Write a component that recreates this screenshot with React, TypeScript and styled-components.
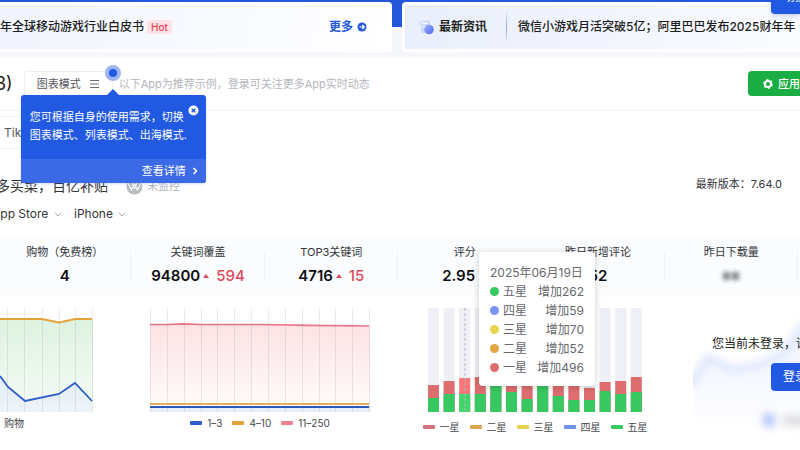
import React from "react";
import styled, { createGlobalStyle } from "styled-components";

const GlobalStyle = createGlobalStyle`
  * { box-sizing: border-box; }
  body {
    margin: 0;
    background: #fff;
    color: #1c1d20;
    font-family: Inter, "Noto Sans CJK SC", sans-serif;
    font-size: 11px;
    line-height: 16px;
  }
  button, select { font: inherit; border: 0; margin: 0; cursor: pointer; }
  h1, h2, p, ul, dl, dd, dt { margin: 0; padding: 0; font-weight: 400; }
  ul { list-style: none; }
  a { color: inherit; text-decoration: none; }
`;

const Page = styled.main`
  position: relative;
  min-height: 100vh;
  overflow: hidden;
  white-space: nowrap;
`;

/* ---------- Banner ---------- */

const Banner = styled.section`
  display: grid;
  grid-template-columns: 392fr 398fr;
  gap: 10px;
  padding: 2px 0 5px;
  background: linear-gradient(#2457d9 0 27px, #f6f7fb 27px);
`;

const BannerCard = styled.div<{ $side: "left" | "right" }>`
  display: flex;
  align-items: center;
  height: 50px;
  min-width: 0;
  overflow: hidden;
  font-size: 12px;
  font-weight: 500;
  border: solid #fff;
  border-width: ${(p) => (p.$side === "left" ? "3px 3px 3px 0" : "3px 0 3px 3px")};
  border-radius: ${(p) => (p.$side === "left" ? "0 4px 4px 0" : "4px 0 0 4px")};
  background: ${(p) =>
    p.$side === "left"
      ? "linear-gradient(100deg, #f1f4fd, #fbfcff 75%, #fff)"
      : "linear-gradient(100deg, #e9eefb, #f1f4fd 45%, #fbfcff)"};
  padding: ${(p) => (p.$side === "left" ? "0 22px 0 0" : "0 0 0 14px")};
`;

const HotTag = styled.span`
  margin: 0 auto 0 3px;
  padding: 0 4px;
  border-radius: 2px;
  background: #fde3e7;
  color: #ee4456;
  font-size: 10px;
  line-height: 14px;
`;

const MoreLink = styled.a`
  display: flex;
  align-items: center;
  gap: 4px;
  color: #2457d9;
  font-weight: 700;
`;

const NewsIcon = styled.svg`
  flex: none;
`;

const NewsLabel = styled.strong`
  margin-left: 5px;
  font-weight: 700;
`;

const NewsDivider = styled.span`
  width: 1px;
  height: 30px;
  margin: 0 11px 0 19px;
  background: linear-gradient(#dfe7f8, #8ba6dd, #dfe7f8);
`;

const SwitchButton = styled.button`
  position: absolute;
  top: -20px;
  right: 0;
  width: 29px;
  height: 34px;
  padding: 0 0 0 13px;
  overflow: hidden;
  text-align: left;
  white-space: nowrap;
  border-radius: 0 0 0 4px;
  background: #2159e2;
  color: #fff;
  box-shadow: 0 2px 5px #2159e240;
`;

/* ---------- App header ---------- */

const AppHeader = styled.header`
  display: flex;
  align-items: center;
  height: 54px;
  border-bottom: 1px solid #f3f4f6;
`;

const AppTitle = styled.h1`
  margin-left: -5px;
  font-size: 18px;
  line-height: 24px;
`;

const ModeAnchor = styled.div`
  position: relative;
  z-index: 2;
  margin: 0 6px 0 11px;
`;

const ModeButton = styled.button`
  display: flex;
  align-items: center;
  gap: 9px;
  width: 89px;
  height: 26px;
  padding: 0 12px;
  border: 1px solid #eceef2;
  border-radius: 3px;
  background: #fff;
  color: #55575d;
  white-space: nowrap;
`;

const Beacon = styled.span`
  position: absolute;
  top: -6px;
  right: -8px;
  width: 16px;
  height: 16px;
  border: 4px solid #9db6f2;
  border-radius: 50%;
  background: #2159e2;
`;

const Guide = styled.aside`
  position: absolute;
  top: 24px;
  left: -3px;
  width: 185px;
  border-radius: 3px;
  background: #2159e2;
  color: #fff;
  box-shadow: 0 1px 3px #2159e233;

  &::before {
    content: "";
    position: absolute;
    top: -6px;
    left: 86px;
    border: solid transparent;
    border-width: 0 6px 6px;
    border-bottom-color: #2159e2;
  }
`;

const GuideText = styled.p`
  height: 64px;
  padding: 13px 10px 0 9px;
  line-height: 18px;
`;

const GuideClose = styled.button`
  position: absolute;
  top: 10px;
  right: 7px;
  display: flex;
  padding: 0;
  background: none;
`;

const GuideLink = styled.a`
  display: flex;
  align-items: center;
  justify-content: flex-end;
  gap: 6px;
  height: 24px;
  padding-right: 8px;
  border-radius: 0 0 3px 3px;
  background: #3c69e6;
`;

const Hint = styled.p`
  color: #b4b6bb;
`;

const ManageButton = styled.button`
  display: flex;
  align-items: center;
  gap: 5px;
  width: 52px;
  height: 25px;
  margin-left: auto;
  padding: 0 0 0 15px;
  overflow: hidden;
  border-radius: 4px 0 0 4px;
  background: #19ad43;
  color: #fff;
  font-weight: 500;
  white-space: nowrap;

  svg { flex: none; }
`;

/* ---------- App information ---------- */

const Tabs = styled.nav`
  display: flex;
  padding: 5px 0 27px;
`;

const Tab = styled.a`
  padding: 0 20px 0 4px;
  border: solid #f3f4f6;
  border-width: 1px 0;
  color: #55575d;
  font-size: 12px;
  line-height: 31px;
`;

const InfoRow = styled.div`
  display: flex;
  align-items: center;
  height: 20px;
`;

const Subtitle = styled.h2`
  margin-left: -4px;
  font-size: 14px;
  color: #333539;
`;

const Monitor = styled.span`
  display: flex;
  align-items: center;
  gap: 4px;
  margin-left: 18px;
  color: #b4b6bb;
`;

const Version = styled.span`
  margin: 0 18px 4px auto;
  color: #333539;
`;

const Filters = styled.div`
  display: flex;
  gap: 12px;
  margin: 8px 0 11px -8px;
  font-size: 12px;
  line-height: 20px;
`;

const Filter = styled.label`
  display: flex;
  align-items: center;
  gap: 5px;

  select {
    appearance: none;
    padding: 0;
    background: none;
    color: #333539;
    line-height: 20px;
  }
`;

/* ---------- Metrics ---------- */

const Metrics = styled.dl`
  display: grid;
  grid-template-columns: repeat(6, 1fr);
  height: 60px;
  margin: 0 0 13px -2px;
  padding-right: 2px;
  background: #fafcfe;
`;

const Metric = styled.div`
  display: flex;
  flex-direction: column;
  align-items: center;
  gap: 6px;
  padding-top: 9px;
  background: linear-gradient(#eff1f5, #eff1f5) right 17px / 1px 28px no-repeat;

  dt { color: #333539; }
`;

const MetricValue = styled.dd`
  display: flex;
  align-items: center;
  font-size: 15px;
  line-height: 20px;
  font-weight: 600;
  color: #0d0e10;
`;

const Rise = styled.span`
  display: flex;
  align-items: center;
  gap: 7px;
  margin-left: 3px;
  color: #dc4a5a;
  font-weight: 500;

  &::before {
    content: "";
    border: solid transparent;
    border-width: 0 3px 4px;
    border-bottom-color: #dc4a5a;
  }
`;

const ScoreRing = styled.span`
  width: 8px;
  height: 8px;
  margin-left: 4px;
  border: 1px solid #c4c7cd;
  border-radius: 50%;
`;

const Redacted = styled.span`
  display: flex;
  gap: 2px;
  margin-top: 6px;
  filter: blur(2px);

  i { width: 7px; height: 8px; background: #85878c; }
`;

/* ---------- Charts ---------- */

const Charts = styled.section`
  display: grid;
  grid-template-columns: 122fr 276fr 270fr 132fr;
`;

const ChartPanel = styled.div<{ $pad: string }>`
  min-width: 0;
  padding: ${(p) => p.$pad};
`;

const Plot = styled.div`
  position: relative;

  svg { display: block; width: 100%; height: 104px; }
`;

const Legend = styled.ul<{ $top: number; $align?: string }>`
  display: flex;
  justify-content: ${(p) => p.$align ?? "center"};
  gap: 10px;
  margin: ${(p) => p.$top}px -6px 0;
  font-size: 10px;
  line-height: 14px;
  color: #46484d;
`;

const LegendItem = styled.li<{ $color?: string }>`
  display: flex;
  align-items: center;
  gap: 5px;

  &::before {
    content: ${(p) => (p.$color ? '""' : "none")};
    width: 12px;
    height: 4px;
    border-radius: 1px;
    background: ${(p) => p.$color};
  }
`;

const ChartTip = styled.div`
  position: absolute;
  z-index: 2;
  top: -56px;
  left: 51px;
  width: 116px;
  padding: 11px 11px 9px;
  border-radius: 4px;
  background: #fff;
  box-shadow: 0 1px 7px #00000033;
  color: #66686c;
  font-size: 12px;
  line-height: 19px;
`;

const TipRow = styled.li<{ $color: string }>`
  display: flex;
  align-items: center;
  gap: 4px;

  &::before {
    content: "";
    width: 9px;
    height: 9px;
    border-radius: 50%;
    background: ${(p) => p.$color};
  }

  span:last-child { margin-left: auto; }
`;

const LoginPanel = styled.div`
  position: relative;
  display: flex;
  flex-direction: column;
  align-items: flex-start;
  height: 140px;
  margin-left: 25px;
  padding: 27px 0 0 19px;
  overflow: hidden;
  font-size: 12px;
  line-height: 18px;
  color: #1c1d20;
`;

const LoginBackdrop = styled.svg`
  position: absolute;
  inset: 0;
  width: 100%;
  height: 100%;
`;

const LoginText = styled.p`
  position: relative;
`;

const LoginButton = styled.button`
  position: relative;
  align-self: stretch;
  height: 28px;
  margin: 10px 0 0 59px;
  padding: 0 0 0 12px;
  overflow: hidden;
  border-radius: 4px 0 0 4px;
  background: #2159e2;
  color: #fff;
  text-align: left;
  white-space: nowrap;
`;

/* ---------- Data ---------- */

const STARS = {
  one: "#dd6e6e",
  two: "#e5a644",
  three: "#e8d44d",
  four: "#7b93f5",
  five: "#38c862",
};

const tipRows = [
  { name: "五星", value: "增加262", color: STARS.five },
  { name: "四星", value: "增加59", color: STARS.four },
  { name: "三星", value: "增加70", color: STARS.three },
  { name: "二星", value: "增加52", color: STARS.two },
  { name: "一星", value: "增加496", color: STARS.one },
];

const starLegend = [
  { name: "一星", color: "#d2737a" },
  { name: "二星", color: "#dca54e" },
  { name: "三星", color: "#e6d450" },
  { name: "四星", color: "#6f92e6" },
  { name: "五星", color: STARS.five },
];

/* Heights of the one-star + five-star stack and of its five-star part */
const ratingBars: [number, number][] = [
  [27, 14], [31, 18], [34, 18], [35, 18], [34, 27], [32, 20], [30, 13],
  [33, 27], [31, 16], [29, 12], [24, 12], [30, 21], [31, 18], [35, 20],
];

/* ---------- Drawings ---------- */

const Chevron = () => (
  <svg width="8" height="5" viewBox="0 0 8 5" fill="none" stroke="#a3a6ad">
    <path d="M1 .8 4 4 7 .8" />
  </svg>
);

const RankChart = () => (
  <svg viewBox="0 0 94 104" preserveAspectRatio="none" role="img" aria-label="购物排名">
    <defs>
      <linearGradient id="rankGreen" x2="0" y2="1">
        <stop offset="0" stopColor="#def2e0" />
        <stop offset="1" stopColor="#f5fbf6" />
      </linearGradient>
      <linearGradient id="rankBlue" x2="0" y2="1">
        <stop offset="0" stopColor="#e0edf3" />
        <stop offset="1" stopColor="#edf3f9" />
      </linearGradient>
    </defs>
    <path d="M0 11H42L59 14.500 75 11H93V104H0Z" fill="url(#rankGreen)" />
    <path d="M0 68 8 79 25 93 59 86 75 75 92 93V104H0Z" fill="url(#rankBlue)" />
    <path d="M7.500 0V104M24.500 0V104M42.500 0V104M59.500 0V104M75.500 0V104M92.500 0V104" stroke="#00000014" />
    <path d="M0 11H42L59 14.500 75 11H92" fill="none" stroke="#e5a23a" strokeWidth="1.800" />
    <path d="M0 68 8 79 25 93 59 86 75 75 92 93" fill="none" stroke="#2f5bcb" strokeWidth="1.800" />
  </svg>
);

const KeywordChart = () => (
  <svg viewBox="0 0 220 104" preserveAspectRatio="none" role="img" aria-label="关键词覆盖">
    <defs>
      <linearGradient id="keywordPink" x2="0" y2="1">
        <stop offset="0" stopColor="#fde2e4" />
        <stop offset="1" stopColor="#fffafa" />
      </linearGradient>
    </defs>
    <path d="M0 16.500 34 16 220 18V96H0Z" fill="url(#keywordPink)" />
    <path d="M0 98H220V104H0Z" fill="#e6eef8" />
    {Array.from({ length: 14 }, (_, i) => (
      <path key={i} d={`M${Math.round(i * 16.85) + 0.5} 0V104`} stroke="#00000014" />
    ))}
    <path d="M0 16.500H17L34 15.800 51 16.500 110 16.500 160 17.300 219 18" fill="none" stroke="#e87585" strokeWidth="1.700" />
    <path d="M0 96H219" stroke="#dfae63" strokeWidth="2.200" />
    <path d="M0 99H219" stroke="#2f56bd" strokeWidth="2" />
  </svg>
);

const RatingChart = () => (
  <svg viewBox="0 0 214 104" preserveAspectRatio="none" role="img" aria-label="评分分布">
    {ratingBars.map(([total, five], i) => {
      const x = i * 15.6;
      return (
        <g key={i}>
          <rect x={x} width="11" height="104" fill="#eff0f5" />
          <rect x={x} y={104 - total} width="11" height={total} fill={i === 2 ? "#fb7777" : "#de6d70"} />
          <rect x={x} y={104 - five} width="11" height={five} fill={i === 2 ? "#41d66c" : STARS.five} />
        </g>
      );
    })}
    <path d="M37 0V104" stroke="#b3b5bc" strokeDasharray="3 2" />
  </svg>
);

/* ---------- Page ---------- */

export default function App() {
  return (
    <>
      <GlobalStyle />
      <Page>
        <Banner>
          <BannerCard $side="left">
            <span>年全球移动游戏行业白皮书</span>
            <HotTag>Hot</HotTag>
            <MoreLink href="#more">
              更多
              <svg width="10" height="10" viewBox="0 0 10 10" fill="none">
                <circle cx="5" cy="5" r="4.500" fill="#2457d9" />
                <path d="M2.500 5H7M5.300 3 7.300 5 5.300 7" stroke="#fff" strokeWidth="1.200" />
              </svg>
            </MoreLink>
          </BannerCard>
          <BannerCard $side="right">
            <NewsIcon width="15" height="16" viewBox="0 0 15 16">
              <defs>
                <linearGradient id="newsPaper" x2="1" y2="1">
                  <stop offset="0" stopColor="#e3ebff" />
                  <stop offset="1" stopColor="#b3c8fa" />
                </linearGradient>
                <linearGradient id="newsBall" x2="1" y2="1">
                  <stop offset="0" stopColor="#9db4ff" />
                  <stop offset="1" stopColor="#5468ee" />
                </linearGradient>
              </defs>
              <path d="M2 1H9Q11 1 11 3V12Q11 14 9 14H4Q2 14 2 12V7H0V3Q0 1 2 1Z" fill="url(#newsPaper)" />
              <path d="M4 4.500H9M4 7.500H8" stroke="#fff" />
              <circle cx="10" cy="10.500" r="4.800" fill="url(#newsBall)" />
            </NewsIcon>
            <NewsLabel>最新资讯</NewsLabel>
            <NewsDivider />
            <span>微信小游戏月活突破5亿；阿里巴巴发布2025财年年</span>
          </BannerCard>
        </Banner>
        <SwitchButton>切换</SwitchButton>

        <AppHeader>
          <AppTitle>3)</AppTitle>
          <ModeAnchor>
            <ModeButton>
              图表模式
              <svg width="9" height="8" viewBox="0 0 9 8" stroke="#6a6c72">
                <path d="M0 .5H9M0 4H9M0 7.500H9" />
              </svg>
            </ModeButton>
            <Guide>
              <GuideText>
                您可根据自身的使用需求，切换
                <br />
                图表模式、列表模式、出海模式.
              </GuideText>
              <GuideClose aria-label="关闭">
                <svg width="11" height="11" viewBox="0 0 11 11">
                  <circle cx="5.500" cy="5.500" r="5" fill="#fff" />
                  <path d="M3.700 3.700 7.300 7.300M7.300 3.700 3.700 7.300" stroke="#2159e2" strokeWidth="1.400" />
                </svg>
              </GuideClose>
              <GuideLink href="#detail">
                查看详情
                <svg width="6" height="8" viewBox="0 0 6 8" fill="none" stroke="#fff" strokeWidth="1.500">
                  <path d="M1.500 1 4.500 4 1.500 7" />
                </svg>
              </GuideLink>
            </Guide>
            <Beacon />
          </ModeAnchor>
          <Hint>以下App为推荐示例，登录可关注更多App实时动态</Hint>
          <ManageButton>
            <svg width="10" height="10" viewBox="0 0 10 10" fill="none" stroke="#fff">
              <circle cx="5" cy="5" r="3" strokeWidth="2" />
              <circle cx="5" cy="5" r="4.300" strokeWidth="1.200" strokeDasharray="2.200 2.300" />
            </svg>
            应用管
          </ManageButton>
        </AppHeader>

        <Tabs>
          <Tab href="#tik">Tik</Tab>
        </Tabs>

        <InfoRow>
          <Subtitle>多买菜，百亿补贴</Subtitle>
          <Monitor>
            <svg width="17" height="17" viewBox="0 0 17 17" fill="none">
              <circle cx="8.500" cy="8.500" r="8" fill="#b9bbc0" />
              <path d="M2 5 5.500 12 8.500 6 11.500 12 15 5M5.500 4.500 8.500 10 11.500 4.500" stroke="#fff" strokeWidth="1.200" />
            </svg>
            未监控
          </Monitor>
          <Version>最新版本：7.64.0</Version>
        </InfoRow>

        <Filters>
          <Filter>
            <select aria-label="应用商店">
              <option>App Store</option>
            </select>
            <Chevron />
          </Filter>
          <Filter>
            <select aria-label="设备">
              <option>iPhone</option>
            </select>
            <Chevron />
          </Filter>
        </Filters>

        <Metrics>
          <Metric>
            <dt>购物（免费榜）</dt>
            <MetricValue>4</MetricValue>
          </Metric>
          <Metric>
            <dt>关键词覆盖</dt>
            <MetricValue>94800<Rise>594</Rise></MetricValue>
          </Metric>
          <Metric>
            <dt>TOP3关键词</dt>
            <MetricValue>4716<Rise>15</Rise></MetricValue>
          </Metric>
          <Metric>
            <dt>评分</dt>
            <MetricValue>2.95<ScoreRing /></MetricValue>
          </Metric>
          <Metric>
            <dt>昨日新增评论</dt>
            <MetricValue>52</MetricValue>
          </Metric>
          <Metric>
            <dt>昨日下载量</dt>
            <MetricValue>
              <Redacted aria-hidden="true"><i /><i /></Redacted>
            </MetricValue>
          </Metric>
        </Metrics>

        <Charts>
          <ChartPanel $pad="0 28px 0 0">
            <Plot><RankChart /></Plot>
            <Legend $top={4} $align="flex-start">
              <LegendItem />
              <LegendItem>购物</LegendItem>
            </Legend>
          </ChartPanel>
          <ChartPanel $pad="0 28px">
            <Plot><KeywordChart /></Plot>
            <Legend $top={4}>
              <LegendItem $color="#2f5bcb">1–3</LegendItem>
              <LegendItem $color="#e5a23a">4–10</LegendItem>
              <LegendItem $color="#ee8090">11–250</LegendItem>
            </Legend>
          </ChartPanel>
          <ChartPanel $pad="0 26px 0 30px">
            <Plot>
              <RatingChart />
              <ChartTip>
                <p>2025年06月19日</p>
                <ul>
                  {tipRows.map((row) => (
                    <TipRow key={row.name} $color={row.color}>
                      <span>{row.name}</span>
                      <span>{row.value}</span>
                    </TipRow>
                  ))}
                </ul>
              </ChartTip>
            </Plot>
            <Legend $top={8}>
              {starLegend.map((item) => (
                <LegendItem key={item.name} $color={item.color}>{item.name}</LegendItem>
              ))}
            </Legend>
          </ChartPanel>
          <LoginPanel>
            <LoginBackdrop viewBox="0 0 107 140" preserveAspectRatio="none" aria-hidden="true">
              <defs>
                <filter id="soft" x="-20%" y="-20%" width="140%" height="140%">
                  <feGaussianBlur stdDeviation="4" />
                </filter>
                <linearGradient id="wave" x2="0" y2="1">
                  <stop offset="0" stopColor="#eef2fd" />
                  <stop offset="1" stopColor="#fcfdff" />
                </linearGradient>
              </defs>
              <g filter="url(#soft)">
                <path d="M-12 84 2 70 15 48 40 60 67 55 90 44 107 20 125 4V112H-12Z" fill="url(#wave)" />
                <path d="M-12 84 2 70 15 50 40 62 67 57 90 46 107 22 125 4" fill="none" stroke="#dbe4fb" strokeWidth="7" />
                <rect x="70" y="106" width="12" height="12" fill="#a9bdf6" />
                <rect x="90" y="107" width="30" height="11" fill="#dddee2" />
              </g>
            </LoginBackdrop>
            <LoginText>您当前未登录，请</LoginText>
            <LoginButton>登录</LoginButton>
          </LoginPanel>
        </Charts>
      </Page>
    </>
  );
}
